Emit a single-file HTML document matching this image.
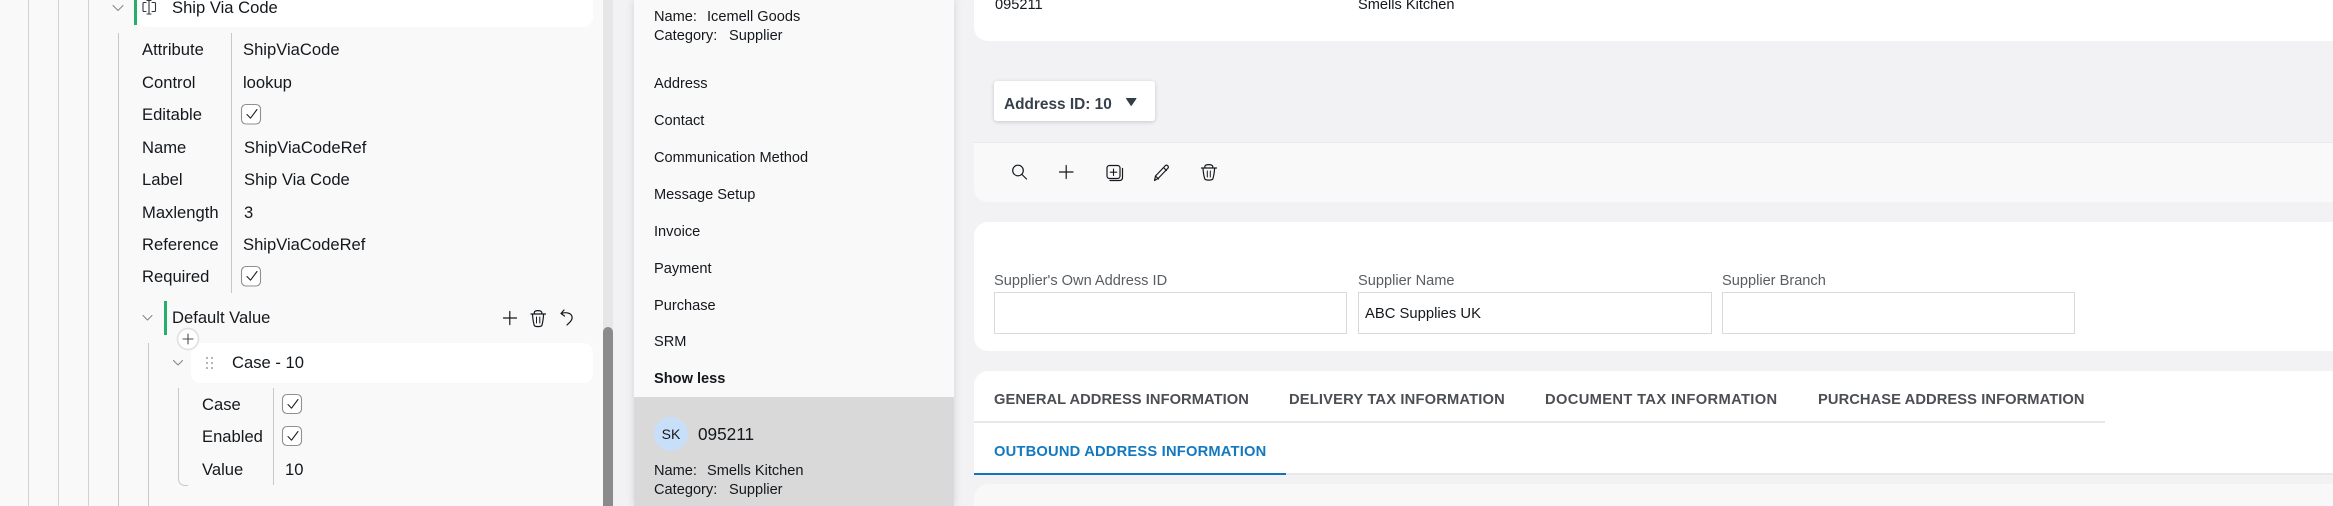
<!DOCTYPE html>
<html><head><meta charset="utf-8">
<style>
html,body{margin:0;padding:0;width:2333px;height:506px;overflow:hidden;background:#f2f2f4;font-family:"Liberation Sans",sans-serif;color:#14181c}
#p{position:relative;width:2333px;height:506px;overflow:hidden;background:#f2f2f4}
.a{position:absolute}
.t{position:absolute;line-height:20px;height:20px;white-space:nowrap;font-size:16.6px;margin-top:1px}
.m{font-size:14.6px}
.tab{font-size:14.7px;font-weight:bold;color:#4b4e53}
.l{font-size:14.6px;color:#595d62}
.in{position:absolute;top:292px;height:39px;border:1.5px solid #d9d9d9;background:#fff;box-sizing:content-box}
svg{position:absolute;left:0;top:0}
</style></head><body><div id="p">
<div class="a" style="left:0;top:0;width:603px;height:506px;background:#f9f9fa"></div>
<div class="a" style="left:137px;top:-12px;width:456px;height:39px;background:#fff;border-radius:10px"></div>
<div class="a" style="left:191px;top:343px;width:402px;height:40px;background:#fff;border-radius:10px"></div>
<div class="a" style="left:603px;top:0;width:10px;height:506px;background:#e6e6e7"></div>
<div class="a" style="left:603px;top:327px;width:10px;height:179px;background:#8b8b8b;border-radius:5px 5px 0 0"></div>

<div class="a" style="left:28px;top:0;width:1px;height:506px;background:#d2d2d2"></div>
<div class="a" style="left:58px;top:0;width:1px;height:506px;background:#d2d2d2"></div>
<div class="a" style="left:88px;top:0;width:1px;height:506px;background:#d2d2d2"></div>
<div class="a" style="left:118px;top:33px;width:1px;height:473px;background:#c8c8c8"></div>
<div class="a" style="left:148px;top:343px;width:1px;height:163px;background:#c8c8c8"></div>
<div class="a" style="left:231px;top:33px;width:1px;height:260px;background:#c8c8c8"></div>
<div class="a" style="left:273px;top:388px;width:1px;height:97px;background:#c8c8c8"></div>
<div class="a" style="left:178px;top:388px;width:9px;height:97px;border-left:1px solid #c8c8c8;border-bottom:1px solid #c8c8c8;border-bottom-left-radius:7px"></div>
<div class="a" style="left:134px;top:0;width:3px;height:25px;background:#27ae6b"></div>
<div class="a" style="left:164px;top:301px;width:3px;height:34px;background:#27ae6b"></div>

<div class="t" style="left:172px;top:-3px">Ship Via Code</div>
<div class="t" style="left:142px;top:39px">Attribute</div><div class="t" style="left:243px;top:39px">ShipViaCode</div>
<div class="t" style="left:142px;top:72px">Control</div><div class="t" style="left:243px;top:72px">lookup</div>
<div class="t" style="left:142px;top:104px">Editable</div>
<div class="t" style="left:142px;top:137px">Name</div><div class="t" style="left:244px;top:137px">ShipViaCodeRef</div>
<div class="t" style="left:142px;top:169px">Label</div><div class="t" style="left:244px;top:169px">Ship Via Code</div>
<div class="t" style="left:142px;top:202px">Maxlength</div><div class="t" style="left:244px;top:202px">3</div>
<div class="t" style="left:142px;top:234px">Reference</div><div class="t" style="left:243px;top:234px">ShipViaCodeRef</div>
<div class="t" style="left:142px;top:266px">Required</div>
<div class="t" style="left:172px;top:307px">Default Value</div>
<div class="t" style="left:232px;top:352px">Case - 10</div>
<div class="t" style="left:202px;top:394px">Case</div>
<div class="t" style="left:202px;top:426px">Enabled</div>
<div class="t" style="left:202px;top:459px">Value</div><div class="t" style="left:285px;top:459px">10</div>

<!-- middle panel -->
<div class="a" style="left:634px;top:0;width:320px;height:506px;background:#f9f9fa;box-shadow:0 0 8px rgba(0,0,0,.13)"></div>
<div class="a" style="left:634px;top:397px;width:320px;height:109px;background:#d9d9d9"></div>
<div class="t m" style="left:654px;top:6px">Name:</div><div class="t m" style="left:707px;top:6px">Icemell Goods</div>
<div class="t m" style="left:654px;top:25px">Category:</div><div class="t m" style="left:729px;top:25px">Supplier</div>
<div class="t m" style="left:654px;top:73px">Address</div>
<div class="t m" style="left:654px;top:110px">Contact</div>
<div class="t m" style="left:654px;top:147px">Communication Method</div>
<div class="t m" style="left:654px;top:184px">Message Setup</div>
<div class="t m" style="left:654px;top:221px">Invoice</div>
<div class="t m" style="left:654px;top:258px">Payment</div>
<div class="t m" style="left:654px;top:295px">Purchase</div>
<div class="t m" style="left:654px;top:331px">SRM</div>
<div class="t m" style="left:654px;top:368px;font-weight:bold">Show less</div>
<div class="a" style="left:654px;top:417px;width:34px;height:34px;border-radius:50%;background:#c8dff9"></div>
<div class="t" style="left:654px;top:423px;width:34px;text-align:center;font-size:14px">SK</div>
<div class="t" style="left:698px;top:423px;font-size:17.2px">095211</div>
<div class="t m" style="left:654px;top:460px">Name:</div><div class="t m" style="left:707px;top:460px">Smells Kitchen</div>
<div class="t m" style="left:654px;top:479px">Category:</div><div class="t m" style="left:729px;top:479px">Supplier</div>

<!-- main -->
<div class="a" style="left:974px;top:-20px;width:1359px;height:61px;background:#fff;border-radius:0 0 0 14px"></div>
<div class="t m" style="left:995px;top:-6px">095211</div>
<div class="t m" style="left:1358px;top:-6px">Smells Kitchen</div>
<div class="a" style="left:994px;top:81px;width:161px;height:40px;background:#fff;border-radius:3px;box-shadow:0 1px 4px rgba(0,0,0,.18)"></div>
<div class="t" style="left:1004px;top:94px;font-size:15.4px;font-weight:bold;color:#36414b">Address ID: 10</div>
<div class="a" style="left:974px;top:142px;width:1359px;height:60px;background:#f9f9fa;border-top:1px solid #e9e9eb;box-sizing:border-box;border-radius:0 0 0 14px"></div>
<div class="a" style="left:974px;top:222px;width:1359px;height:129px;background:#fff;border-radius:14px 0 0 14px"></div>
<div class="t l" style="left:994px;top:270px">Supplier's Own Address ID</div>
<div class="t l" style="left:1358px;top:270px">Supplier Name</div>
<div class="t l" style="left:1722px;top:270px">Supplier Branch</div>
<div class="in" style="left:994px;width:351px;height:40px"></div>
<div class="in" style="left:1358px;width:352px;height:40px"></div>
<div class="in" style="left:1722px;width:351px;height:40px"></div>
<div class="t" style="left:1365px;top:303px;font-size:14.8px">ABC Supplies UK</div>

<div class="a" style="left:974px;top:371px;width:1359px;height:104px;background:#fff;border-radius:14px 0 0 0"></div>
<div class="t tab" style="left:994px;top:389px;letter-spacing:.05px">GENERAL ADDRESS INFORMATION</div>
<div class="t tab" style="left:1289px;top:389px;letter-spacing:.18px">DELIVERY TAX INFORMATION</div>
<div class="t tab" style="left:1545px;top:389px;letter-spacing:.36px">DOCUMENT TAX INFORMATION</div>
<div class="t tab" style="left:1818px;top:389px;letter-spacing:.08px">PURCHASE ADDRESS INFORMATION</div>
<div class="a" style="left:974px;top:421px;width:1131px;height:2px;background:#e8e8e9"></div>
<div class="t tab" style="left:994px;top:441px;color:#1278c0;letter-spacing:.2px">OUTBOUND ADDRESS INFORMATION</div>
<div class="a" style="left:974px;top:473px;width:1359px;height:2px;background:#e8e8e9"></div>
<div class="a" style="left:974px;top:473px;width:312px;height:2px;background:#1274b6"></div>
<div class="a" style="left:974px;top:484px;width:1359px;height:22px;background:#f8f8f9;border-radius:14px 0 0 0"></div>

<svg width="2333" height="506" viewBox="0 0 2333 506" fill="none" stroke="#15191d" stroke-width="1.3" stroke-linecap="round" stroke-linejoin="round">
 <!-- chevrons -->
 <g stroke="#858a8f" stroke-width="1.1">
  <path d="M113 5.500l5 5 5-5"/>
  <path d="M143 315.500l4.500 4.500 4.500-4.500"/>
  <path d="M173.500 360.500l4.500 4.500 4.500-4.500"/>
 </g>
 <!-- field icon -->
 <path d="M146 2.500h-2c-.6 0-1 .4-1 1v7c0 .6.400 1 1 1h2M152 2.500h2.500c.6 0 1 .4 1 1v7c0 .6-.4 1-1 1H152M149 .5v13.500M147 .5h4M147 14h4" stroke="#30363c" stroke-width="1.1"/>
 <!-- checkboxes -->
 <g stroke="#8f8f8f" fill="#fff" stroke-width="1.1">
  <rect x="241.500" y="104.500" width="19" height="19.500" rx="4.500"/>
  <rect x="241.500" y="266.500" width="19" height="19.500" rx="4.500"/>
  <rect x="282.500" y="394.500" width="19" height="19" rx="4.500"/>
  <rect x="282.500" y="426.500" width="19" height="19" rx="4.500"/>
 </g>
 <g stroke="#15191d" stroke-width="1.05">
  <path d="M247 114.500l3.500 3.700 6.500-8.700"/>
  <path d="M247 276.500l3.500 3.700 6.500-8.700"/>
  <path d="M288 404.500l3.500 3.700 6.500-8.700"/>
  <path d="M288 436.500l3.500 3.700 6.500-8.700"/>
 </g>
 <!-- default value actions -->
 <path d="M503.500 318h13M509.800 311.500v13" stroke-width="1.2"/>
 <g stroke-width="1.2">
  <path d="M531 314h14.500M534.500 314l-.2-1.500c.3-2.500 7-2.500 7.500 0l-.2 1.500M532.500 314.500c.3 4 .8 8 1.800 11 1 1.500 6.500 1.500 7.500 0 1-3 1.500-7 1.800-11"/>
  <path d="M536.500 317v6M539.800 317v6" stroke-width="1"/>
 </g>
 <path d="M564 310l-3 3.500 3.500 2.500M561 313.500c4-1.500 10-1 11 3 .8 3.500-2.500 6-5 8.500" stroke-width="1.2"/>
 <!-- plus circle -->
 <circle cx="188" cy="339" r="10.500" fill="#fff" stroke="#e0e0e0" stroke-width="1.6"/>
 <path d="M183 339h10M188 334v10" stroke="#4a4f55" stroke-width="1.1"/>
 <!-- drag dots -->
 <g fill="#b5b5b5" stroke="none">
  <rect x="206" y="357" width="2" height="2"/><rect x="211" y="357" width="2" height="2"/>
  <rect x="206" y="362" width="2" height="2"/><rect x="211" y="362" width="2" height="2"/>
  <rect x="206" y="367" width="2" height="2"/><rect x="211" y="367" width="2" height="2"/>
 </g>
 <!-- dropdown triangle -->
 <path d="M1126.500 98.500h9.500l-4.800 7z" fill="#333e48" stroke="#333e48" stroke-width="1"/>
 <!-- toolbar -->
 <circle cx="1018" cy="170.500" r="5.300" stroke-width="1.2"/>
 <path d="M1022 174.500l4.500 4.500" stroke-width="1.2"/>
 <path d="M1059.500 172h13.500M1066.200 165.500v13" stroke-width="1.2"/>
 <rect x="1107" y="165.500" width="13" height="13" rx="2.500" stroke-width="1.2"/>
 <path d="M1113.500 169v6.500M1110.300 172.200h6.500" stroke-width="1.1"/>
 <path d="M1122.500 168.500v9c0 2-1 3-3 3h-9.500" stroke-width="1.2"/>
 <path d="M1154.500 180.500l1-4.500 10-10.500c1.500-1.200 3.500.8 2.600 2.500l-10 10.500z M1163.500 167.500l3 3 M1155.500 176l3 3" stroke-width="1.2"/>
 <g stroke-width="1.2">
  <path d="M1201.500 168h15M1205 168l-.2-1.500c.3-2.500 7.500-2.500 8 0l-.2 1.500M1203 168.500c.3 4 .8 7.500 1.800 10.500 1 1.500 7 1.500 8 0 1-3 1.500-6.500 1.800-10.500"/>
  <path d="M1207.300 171v6M1210.300 171v6" stroke-width="1"/>
 </g>
</svg>
</div></body></html>
